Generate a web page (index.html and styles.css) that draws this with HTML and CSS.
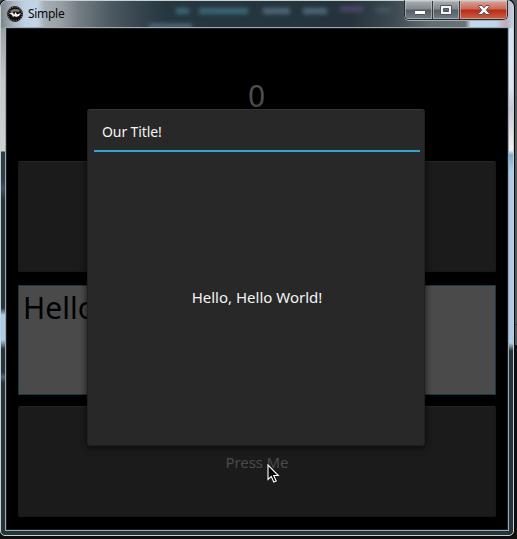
FILE: index.html
```html
<!DOCTYPE html>
<html lang="en">
<head>
<meta charset="utf-8">
<title>Simple</title>
<link rel="stylesheet" href="styles.css">
</head>
<body>
<div class="window">
  <div class="glow"><div class="reflections"></div></div>
  <header class="titlebar">
    <svg class="app-icon" width="16" height="16" viewBox="0 0 16 16">
      <circle cx="8" cy="8" r="7.4" fill="#111" stroke="#080808"/>
      <circle cx="8" cy="8" r="7" fill="none" stroke="#aaa385" stroke-width="1" stroke-dasharray="1 1.3"/>
      <path d="M3 5Q7 1.5 13 4L12 6L8 5.5L4 6.5Z" fill="#77766f"/>
      <path d="M2 7L6 6.5L7 9L8.5 6L10 8.5L14 7L12 10L9 11L7.5 10L6 11L5 9Z" fill="#f4f4f4"/>
    </svg>
    <span class="caption">Simple</span>
    <div class="controls">
      <div class="control minimize"><svg width="12" height="6" viewBox="0 0 12 6"><rect x=".5" y=".5" width="11" height="4" rx=".6" fill="#fff" stroke="#505461"/></svg></div>
      <div class="control maximize"><svg width="12" height="10" viewBox="0 0 12 10"><path fill-rule="evenodd" d="M.5.5h11v9H.5zM3.5 3.5v3h5v-3z" fill="#f5f5f5" stroke="#505461"/></svg></div>
      <div class="control close"><svg width="12" height="10" viewBox="0 0 12 10"><path d="M.6.5H4L6 2.8L8 .5H11.4V1.5L8.3 5L11.4 8.5V9.5H8L6 7.2L4 9.5H.6V8.5L3.7 5L.6 1.5Z" fill="#f7f7f7" stroke="#604b56"/></svg></div>
    </div>
  </header>
  <main class="client">
    <div class="counter">0</div>
    <div class="button"></div>
    <div class="input">Hello</div>
    <div class="button press">Press Me</div>
    <section class="popup">
      <h1 class="popup-title">Our Title!</h1>
      <p class="popup-message">Hello, Hello World!</p>
    </section>
    <svg class="cursor" width="13" height="20" viewBox="0 0 13 20"><path d="M1 1V15.5L4.2 12.4L6.8 18L9.2 17L6.7 11.5H11.3Z" fill="#050505" stroke="#fff" stroke-width="1.1"/></svg>
  </main>
</div>
</body>
</html>
```
FILE: styles.css
```css
* { box-sizing: border-box; }

body {
  margin: 0;
  height: 539px;
  overflow: hidden;
  background: linear-gradient(#555a58 0 324px, #353938 324px 325px, #555 325px 345px, #12100f 345px);
  font-family: "Noto Sans", "Open Sans", sans-serif;
}

.window {
  position: relative;
  display: flex;
  flex-direction: column;
  width: 514px;
  height: 536px;
  padding: 0 4px 4px;
  border: 1px solid #c9d0d2;
  border-radius: 7px 7px 5px 5px;
  box-shadow: 0 0 0 1px #090909, 0 4px 0 #12100f;
  background:
    linear-gradient(#858c90 0, #c3c8c9 80px, #d0d3d3 150px, #2b3b43 151px, #2c3f48 178px, #3c5362 188px, #24343d 198px, #24343d 307px, #a9cbee 314px, #a9cbee 339px, #24343d 348px, #24343d 371px, #496477 376px, #24323a 382px) left / 6px 100% no-repeat,
    linear-gradient(#cadff5 0, #dce7f5 85px, #c7c9db 108px, #e5dce3 130px, #eef3f8 149px, #7dadd0 154px, #abcaec 170px, #abcaec 342px, #25343c 350px) right / 6px 100% no-repeat,
    #25333b;
}

.glow {
  position: absolute;
  inset: 0 0 auto;
  height: 27px;
  border-radius: 6px 6px 0 0;
  overflow: hidden;
  background:
    linear-gradient(90deg, #7b848a 0, #a9b7c5 13px, #bfd1e5 24px, #c4d4e6 36px, #a5aeb5 44px, #989fa3 60px, #737d83 78px, #4d5b63 108px, #37464f 136px, #263740 165px, #25343c 350px, #3a484f 390px, #626e71 430px, #687276 464px, #c3d8ee 470px, #bcd4ee 495px, #c3a7b5 505px, #bdd3eb 512px);
}

.reflections {
  height: 100%;
  filter: blur(2px);
  background:
    linear-gradient(#3b6777, #3b6777) 175px 7px / 13px 6px no-repeat,
    linear-gradient(#3b6777, #3b6777) 198px 7px / 49px 6px no-repeat,
    linear-gradient(#50677b, #50677b) 262px 7px / 27px 6px no-repeat,
    linear-gradient(#50677b, #50677b) 302px 7px / 24px 6px no-repeat,
    linear-gradient(#49456a, #49456a) 339px 5px / 23px 6px no-repeat,
    linear-gradient(#41545d, #41545d) 375px 6px / 16px 6px no-repeat,
    linear-gradient(#596f8c, #596f8c) 148px 23px / 43px 7px no-repeat;
}

.titlebar {
  position: relative;
  flex: 0 0 26px;
  display: flex;
  align-items: center;
  padding-left: 2px;
}

.app-icon { display: block; }

.caption {
  margin: 0 0 1px 5px;
  font-size: 12px;
  letter-spacing: -0.3px;
  line-height: 18px;
  color: #080808;
}

.controls {
  display: flex;
  align-self: flex-start;
  margin: -1px 1px 0 auto;
  height: 20px;
  border: 1px solid #252b31;
  border-top-color: #c9d0d2;
  border-radius: 0 0 5px 5px;
  box-shadow: 0 1px 0 #a4adb0;
  overflow: hidden;
}

.control {
  display: flex;
  align-items: center;
  justify-content: center;
  padding-bottom: 1px;
  box-shadow: inset 0 0 0 1px #c4c8cc99;
  background: linear-gradient(#a8adb2, #81888e 8px, #555e66 9px, #747d83);
}

.minimize { width: 28px; padding: 5px 0 0 2px; border-right: 1px solid #343a40; }
.maximize { width: 27px; border-right: 1px solid #343a40; }
.close { width: 47px; background: linear-gradient(#dfa093, #c96958 8px, #b52d17 9px, #d05e43); }

.client {
  position: relative;
  flex: 1;
  display: grid;
  grid-template-rows: 111px 111px 110px 111px;
  row-gap: 12px;
  align-content: start;
  padding: 10px 12px 0;
  border: 1px solid #a2a9ab;
  background: #000;
  box-shadow: inset 0 0 0 1px #191f22;
}

.counter {
  display: flex;
  align-items: center;
  justify-content: center;
  padding: 3px 1px 0 0;
  font-size: 30px;
  color: #4d4d4d;
}

.button {
  border: 1px solid #181818;
  border-top: 1px solid #242424;
  border-radius: 2px;
  background: #1b1b1b;
}

.press {
  display: flex;
  align-items: center;
  justify-content: center;
  font-size: 15px;
  letter-spacing: -0.1px;
  color: #4a4a4a;
}

.input {
  margin: 1px 0 -1px;
  padding: 1px 4px;
  border: 1px solid #183a46;
  background: #4a4a4a;
  font-size: 30px;
  line-height: 41px;
  color: #000;
}

.popup {
  position: absolute;
  left: 81px;
  top: 81px;
  display: flex;
  flex-direction: column;
  width: 338px;
  height: 337px;
  padding: 0 4px 0 6px;
  border: 1px solid #202020;
  border-top-color: #363636;
  border-radius: 3px;
  background: #282828;
  box-shadow: 0 1px 7px #000b;
}

.popup-title {
  flex: 0 0 42px;
  margin: 0;
  padding: 12px 8px 0;
  border-bottom: 2px solid #2fa5d2;
  font-size: 14px;
  font-weight: 400;
  letter-spacing: -0.1px;
  line-height: 20px;
  color: #f4f4f4;
}

.popup-message {
  flex: 1;
  display: flex;
  align-items: center;
  justify-content: center;
  margin: 0;
  padding-bottom: 3px;
  font-size: 15px;
  color: #f4f4f4;
}

.cursor {
  position: absolute;
  left: 261px;
  top: 436px;
}
```
